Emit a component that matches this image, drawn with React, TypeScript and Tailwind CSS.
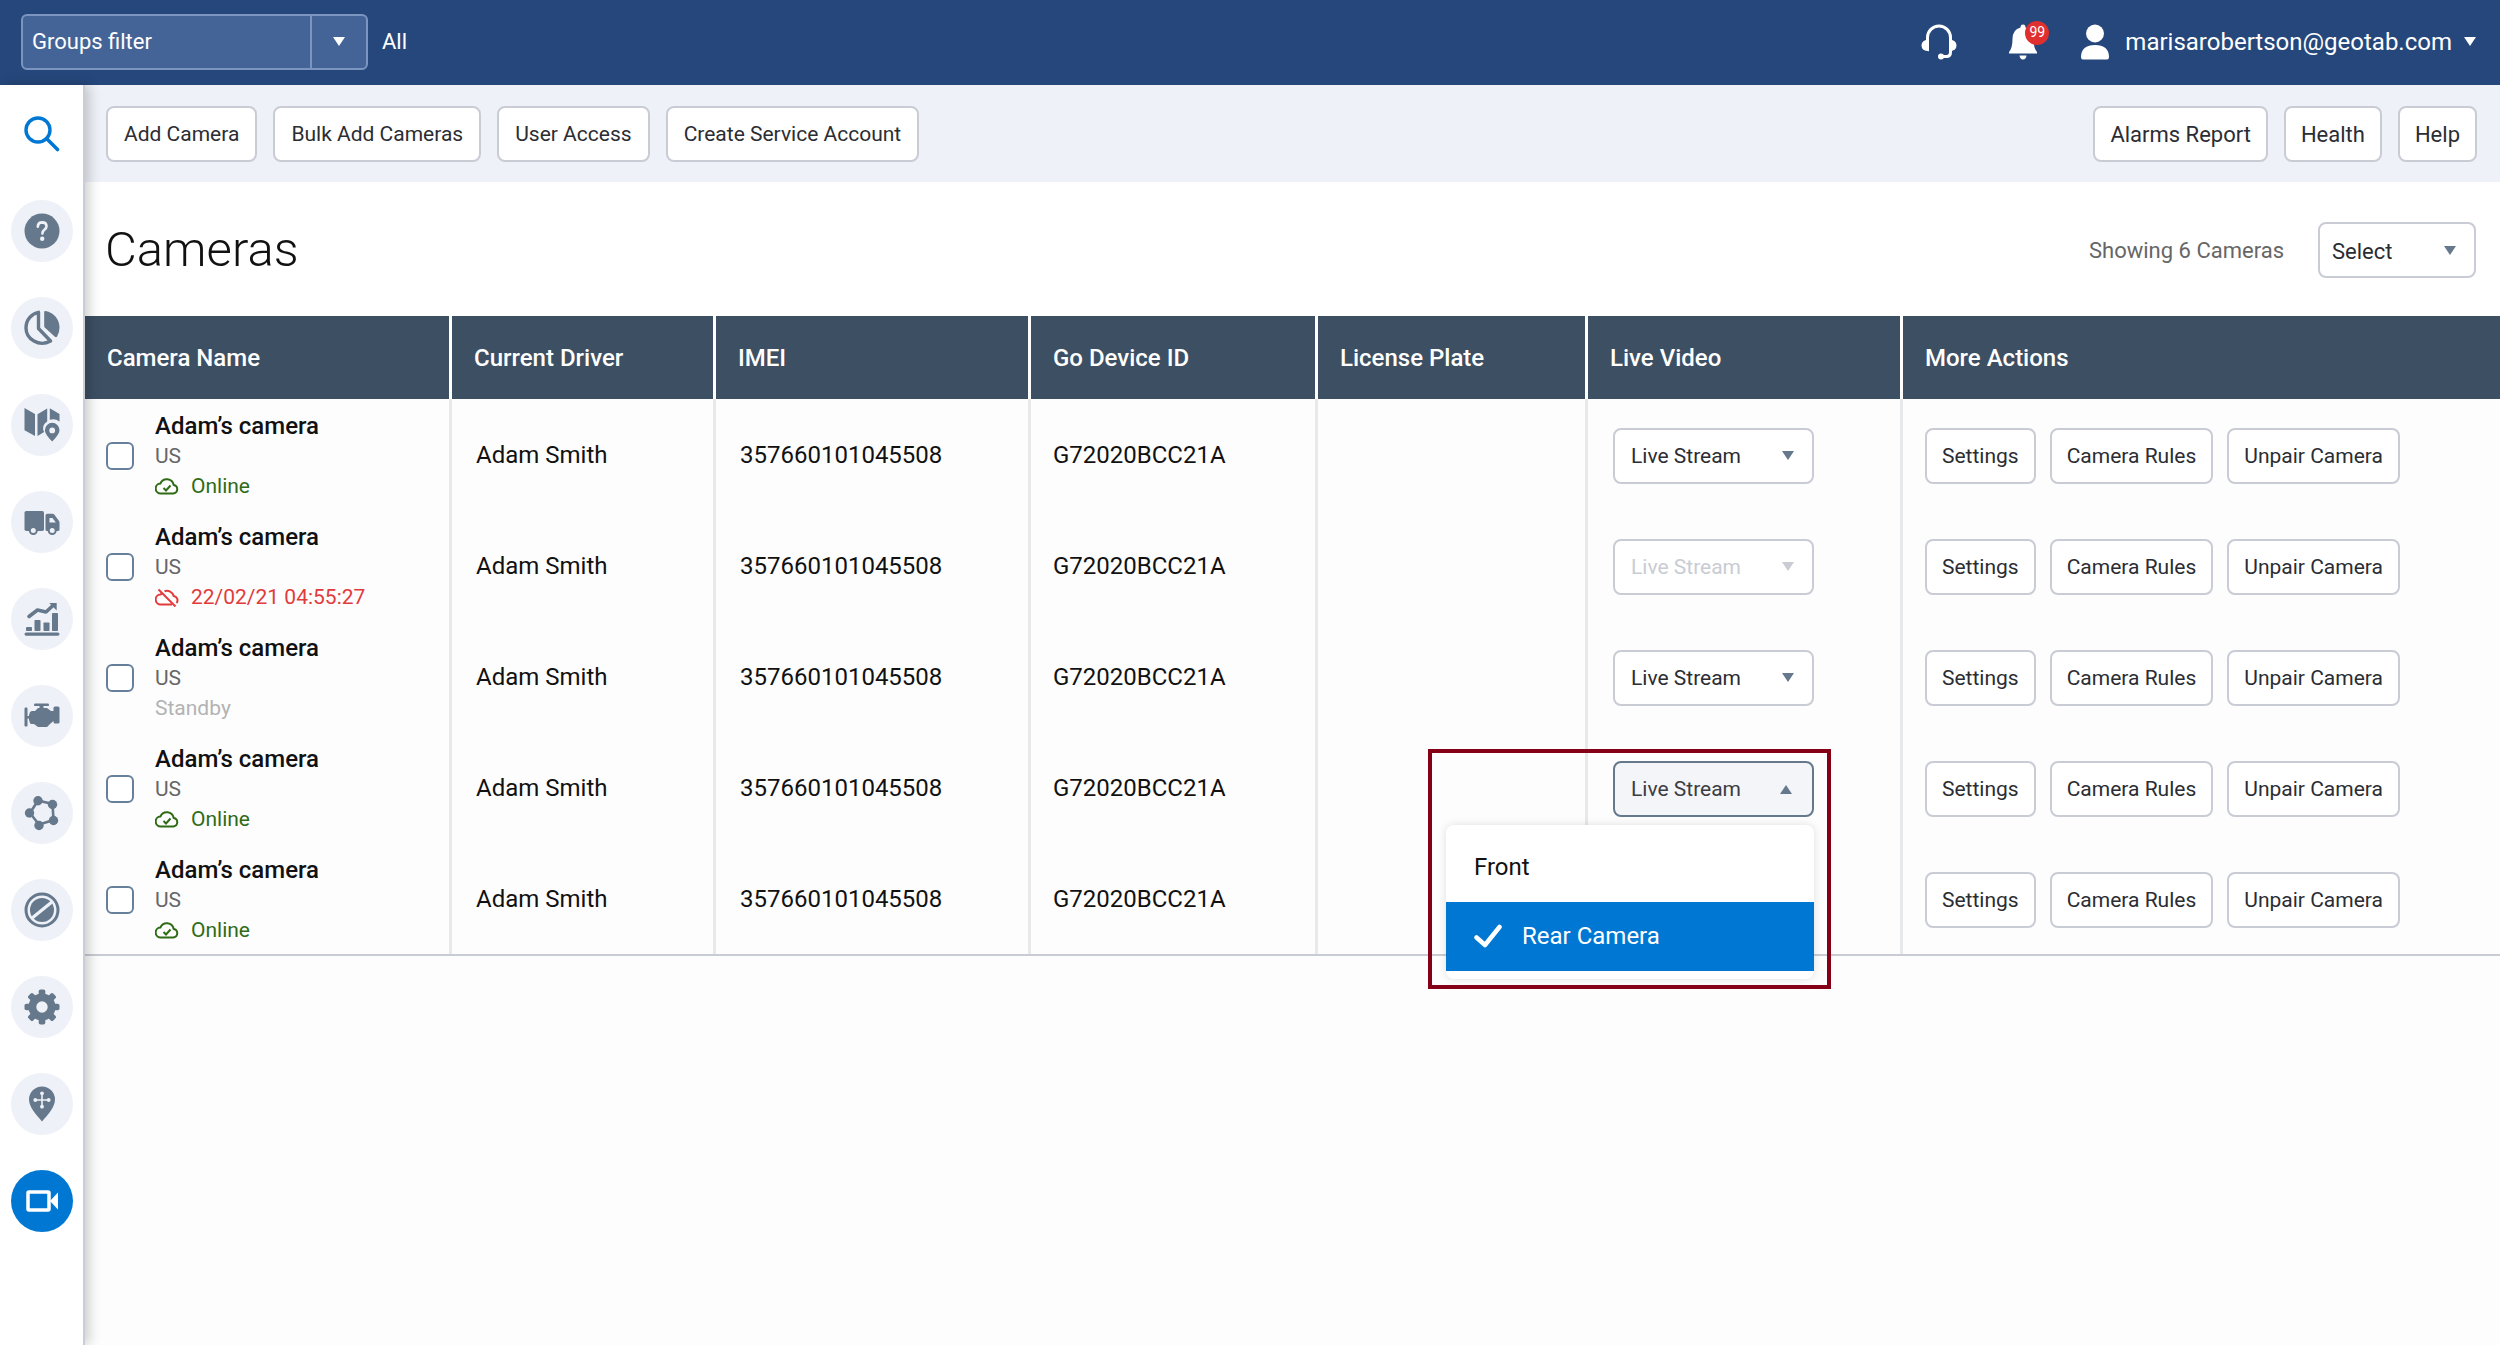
import type { ReactNode } from 'react';

interface Camera {
  id: number;
  status: 'online' | 'offline' | 'standby';
  statusText: string;
}

const CAMERAS: Camera[] = [
  { id: 1, status: 'online', statusText: 'Online' },
  { id: 2, status: 'offline', statusText: '22/02/21 04:55:27' },
  { id: 3, status: 'standby', statusText: 'Standby' },
  { id: 4, status: 'online', statusText: 'Online' },
  { id: 5, status: 'online', statusText: 'Online' },
];

const OPEN_CAMERA_ID = 4;

const STATUS_COLORS = {
  online: 'text-[#2f6b15]',
  offline: 'text-[#e23b3b]',
  standby: 'text-[#b3b3b3]',
};

const COLUMNS = [
  { label: 'Camera Name', width: 'w-[364px]' },
  { label: 'Current Driver', width: 'w-[264px]' },
  { label: 'IMEI', width: 'w-[315px]' },
  { label: 'Go Device ID', width: 'w-[287px]' },
  { label: 'License Plate', width: 'w-[270px]' },
  { label: 'Live Video', width: 'w-[315px]' },
  { label: 'More Actions', width: '' },
];

function Icon({ children, className = 'size-9' }: { children: ReactNode; className?: string }) {
  return (
    <svg viewBox="0 0 36 36" className={className} fill="currentColor" aria-hidden="true">
      {children}
    </svg>
  );
}

const NAV_ITEMS = [
  {
    label: 'Support',
    icon: (
      <>
        <circle cx="18" cy="18" r="17.5" />
        <path d="M13.8 13.6q.3-4.2 4.4-4.2 4.3.1 4.3 3.8 0 2-2.1 3.6-2 1.5-2 3.6" fill="none" stroke="#eef1f7" strokeWidth="2.6" strokeLinecap="round" />
        <circle cx="18.2" cy="25.8" r="2.2" fill="#eef1f7" />
      </>
    ),
  },
  {
    label: 'Dashboard',
    icon: (
      <>
        <path d="M14.5 2.3v16.200L26.500 31C15 37.500 2 29 2 18 2 9.500 8 3.500 14.500 2.300Z" fill="none" stroke="currentColor" strokeWidth="3.4" strokeLinejoin="round" />
        <path d="M20.200 1.800Q20.200.8 21.400 1C30.500 2.600 35.500 10 35.500 17.500q0 5-2.300 8.800-1 1.500-2.300.4L21 17.800q-.8-.8-.8-1.800Z" />
      </>
    ),
  },
  {
    label: 'Map',
    icon: (
      <>
        <path d="M.5 1 11 7v22L.5 23.200ZM13.500 7.200 23.200 1.500v13q-5 3-4 8.500l1 2-6.700 4ZM25.800 1.300 35.500 7v7.500q-4.500-3.500-9.700-1.800Z" />
        <path fillRule="evenodd" d="M28.200 15.800a7.300 7.300 0 0 1 7.300 7.200c0 4-4.300 8.300-7.300 11.500-3-3.200-7.300-7.500-7.300-11.500a7.300 7.300 0 0 1 7.300-7.200Zm0 4.700a2.900 2.900 0 1 0 0 5.800 2.900 2.900 0 0 0 0-5.800Z" />
      </>
    ),
  },
  {
    label: 'Vehicles',
    icon: (
      <>
        <rect x=".5" y="7" width="19.5" height="20" rx="1.8" />
        <path fillRule="evenodd" d="M21.500 11.500q0-1.800 1.800-1.800h5.200q1 0 1.700.9l4.500 6q.8 1 .8 2.300v6.500q0 1.600-1.600 1.600H23q-1.500 0-1.500-1.500Zm4 2.500v4.500h6.300L28.500 14Z" />
        <circle cx="9.3" cy="26.500" r="3.5" stroke="currentColor" strokeWidth="2" fill="#eef1f7" />
        <circle cx="28.200" cy="26.500" r="3.5" stroke="currentColor" strokeWidth="2" fill="#eef1f7" />
      </>
    ),
  },
  {
    label: 'Activity',
    icon: (
      <>
        <rect x=".5" y="31.500" width="35" height="3.200" rx="1.600" />
        <rect x="2" y="26" width="6" height="4" rx=".8" />
        <rect x="10.500" y="19" width="6" height="11" rx=".8" />
        <rect x="19.500" y="21.500" width="6" height="8.500" rx=".8" />
        <rect x="28" y="12" width="6" height="18" rx=".8" />
        <path d="M5 15.500 13.500 9l8.500 2 7.500-7" fill="none" stroke="currentColor" strokeWidth="3.600" strokeLinecap="round" strokeLinejoin="round" />
        <path d="M25.200 2h7.500v7.500Z" />
      </>
    ),
  },
  {
    label: 'Engine & Maintenance',
    icon: (
      <>
        <rect x=".5" y="9.500" width="3" height="19" rx="1.200" />
        <rect x="10" y="5.500" width="15" height="2.600" rx="1.200" />
        <rect x="15.500" y="7" width="4" height="4" />
        <rect x="2.500" y="18" width="4" height="2.500" />
        <path d="M8 13h3l3-3h9l4 3h2.500v-3q0-1.500 1.500-1.500h3.200q1.300 0 1.300 1.500v14q0 1.500-1.300 1.500H31q-1.500 0-1.500-1.500v-1L26 26l-3 3H14l-4-3H7.500q-1.200 0-1.700-1.500-2-5 0-10Q6.500 13 8 13Z" />
      </>
    ),
  },
  {
    label: 'Zones & Messages',
    icon: (
      <>
        <path d="m6 18 8-12.500L28.500 9l1 16L15 29.500Z" fill="none" stroke="currentColor" strokeWidth="2.600" />
        <circle cx="18.500" cy="18" r="8.500" fill="#eef1f7" />
        <circle cx="5.500" cy="18" r="4.700" />
        <circle cx="14" cy="5.800" r="4.700" />
        <circle cx="28.500" cy="9.500" r="4.700" />
        <circle cx="29.500" cy="25.500" r="4.700" />
        <circle cx="15" cy="30.500" r="4.700" />
      </>
    ),
  },
  {
    label: 'Rules',
    icon: (
      <>
        <circle cx="18" cy="18" r="16" fill="none" stroke="currentColor" strokeWidth="3" />
        <circle cx="18" cy="18" r="12" />
        <path d="M7.500 26.500 28.500 9.500" stroke="#eef1f7" strokeWidth="3.200" />
      </>
    ),
  },
  {
    label: 'Administration',
    icon: (
      <>
        <circle cx="18" cy="18" r="9.500" fill="none" stroke="currentColor" strokeWidth="8" />
        {[0, 45, 90, 135].map((angle) => (
          <rect key={angle} x="14.700" y=".5" width="6.600" height="35" rx="1.800" transform={`rotate(${angle} 18 18)`} />
        ))}
        <circle cx="18" cy="18" r="5.700" fill="#eef1f7" />
      </>
    ),
  },
  {
    label: 'Marketplace',
    icon: (
      <>
        <path d="M18 .5A13 13 0 0 1 31 13.500C31 21 24 28.500 18 35.500 12 28.500 5 21 5 13.500A13 13 0 0 1 18 .5Z" />
        <path d="M18 6.500v15M10.500 14h15" stroke="#eef1f7" strokeWidth="1.600" />
        <g fill="#eef1f7">
          <circle cx="18" cy="7.300" r="1.900" />
          <circle cx="18" cy="20.700" r="1.900" />
          <circle cx="11.300" cy="14" r="1.900" />
          <circle cx="24.700" cy="14" r="1.900" />
        </g>
      </>
    ),
  },
];

function Caret({ className = '', up = false }: { className?: string; up?: boolean }) {
  return (
    <svg viewBox="0 0 12 9" className={`h-[9px] w-3 shrink-0 ${className}`} fill="currentColor" aria-hidden="true">
      <path d={up ? 'M6 0 12 9H0Z' : 'M0 0h12L6 9Z'} />
    </svg>
  );
}

function Button({ children, className = 'px-4 text-[21px]' }: { children: ReactNode; className?: string }) {
  return (
    <button className={`h-14 rounded-lg border-2 border-[#c9ccd5] bg-white pt-0.5 whitespace-nowrap text-[#2b2d33] ${className}`}>
      {children}
    </button>
  );
}

function StatusIcon({ status }: { status: Camera['status'] }) {
  if (status === 'standby') return null;
  return (
    <svg viewBox="0 0 24 24" className="mr-3 size-6" fill="none" stroke="currentColor" strokeWidth="2" aria-hidden="true">
      {status === 'online' ? (
        <>
          <path d="M6 19.500a5 5 0 0 1-.6-10A7 7 0 0 1 18.700 11 4.300 4.300 0 0 1 18.500 19.500Z" />
          <path d="m8.500 14 2.500 2.500 4.500-5" />
        </>
      ) : (
        <>
          <path d="M17 19.500H6a5 5 0 0 1-.6-10l1.600-.8M9.500 6.300A7 7 0 0 1 18.700 11a4.300 4.300 0 0 1 2.800 7" />
          <path d="m3.500 4.500 17 17" />
        </>
      )}
    </svg>
  );
}

function LiveMenu() {
  return (
    <div className="absolute top-16 right-0 z-10 w-[368px] rounded-lg bg-white py-2 text-[24px] shadow-[0_0_8px_rgba(0,0,0,0.12)]">
      <button className="flex h-[69px] w-full items-center px-7 text-[#111]">Front</button>
      <button className="flex h-[69px] w-full items-center bg-[#0078d3] px-7 text-white">
        <svg viewBox="0 0 28 24" className="mr-5 h-6 w-7" fill="none" stroke="currentColor" strokeWidth="4.500" strokeLinecap="round" strokeLinejoin="round" aria-hidden="true">
          <path d="m2.500 13.500 8.500 7.500L25.500 3" />
        </svg>
        Rear Camera
      </button>
    </div>
  );
}

function LiveVideo({ camera }: { camera: Camera }) {
  if (camera.id === OPEN_CAMERA_ID) {
    return (
      <div className="relative w-[201px]">
        <button
          aria-expanded="true"
          className="flex h-14 w-full items-center justify-between rounded-lg border-2 border-[#66788c] bg-[#f4f5f8] pt-0.5 pr-5 pl-4 text-[21px] text-[#3b3d43]"
        >
          Live Stream
          <Caret up className="text-[#66788c]" />
        </button>
        <LiveMenu />
        <div className="pointer-events-none absolute -top-3 -right-[17px] z-20 h-[240px] w-[403px] border-4 border-[#850016]" />
      </div>
    );
  }

  const disabled = camera.status === 'offline';
  return (
    <div className={`relative w-[201px] ${disabled ? 'text-[#c9ccd3]' : 'text-[#66788c]'}`}>
      <select
        aria-label="Live video"
        disabled={disabled}
        className={`h-14 w-full appearance-none rounded-lg border-2 border-[#c9ccd5] bg-white pt-0.5 pl-4 text-[21px] ${disabled ? 'text-[#c9ccd3] opacity-100' : 'text-[#2b2d33]'}`}
      >
        <option>Live Stream</option>
      </select>
      <Caret className="pointer-events-none absolute inset-y-0 right-5 my-auto" />
    </div>
  );
}

function CameraRow({ camera }: { camera: Camera }) {
  return (
    <tr className="h-[111px]">
      <td className="pt-0.5 pl-[21px]">
        <div className="flex items-center">
          <input
            type="checkbox"
            aria-label={`Select camera ${camera.id}`}
            className="mr-[21px] size-7 appearance-none rounded-md border-2 border-[#66809c] bg-white"
          />
          <div className="leading-[30px]">
            <div className="text-[24px] font-medium text-[#111]">Adam’s camera</div>
            <div className="text-[21px] text-[#666]">US</div>
            <div className={`flex items-center text-[21px] ${STATUS_COLORS[camera.status]}`}>
              <StatusIcon status={camera.status} />
              {camera.statusText}
            </div>
          </div>
        </div>
      </td>
      <td className="border-l-[3px] border-[#e8e9ea] pl-6">Adam Smith</td>
      <td className="border-l-[3px] border-[#e8e9ea] pl-6">357660101045508</td>
      <td className="border-l-[3px] border-[#e8e9ea] pl-[22px]">G72020BCC21A</td>
      <td className="border-l-[3px] border-[#e8e9ea]" />
      <td className="border-l-[3px] border-[#e8e9ea] pt-0.5 pl-[25px]">
        <LiveVideo camera={camera} />
      </td>
      <td className="border-l-[3px] border-[#e8e9ea] pt-0.5 pl-[22px]">
        <div className="flex gap-[14px]">
          <Button className="px-[15px] text-[21px]">Settings</Button>
          <Button className="px-[15px] text-[21px]">Camera Rules</Button>
          <Button className="px-[15px] text-[21px]">Unpair Camera</Button>
        </div>
      </td>
    </tr>
  );
}

function Header() {
  return (
    <header className="flex h-[85px] items-center bg-[#25477b] pr-6 pb-0.5 pl-[21px] text-white">
      <div className="flex h-14 w-[347px] overflow-hidden rounded-md border-2 border-[#7c95c0] bg-[#446498]">
        <input aria-label="Groups filter" placeholder="Groups filter" className="min-w-0 flex-1 pl-[9px] text-[22px] placeholder:text-white placeholder:opacity-100" />
        <button aria-label="Open groups filter" className="flex w-14 items-center justify-center border-l-2 border-[#7c95c0]">
          <Caret />
        </button>
      </div>
      <span className="ml-[14px] text-[22px]">All</span>
      <div className="ml-auto flex items-center">
        <button aria-label="Support">
          <Icon>
            <path d="M6.500 19V13.500a11.500 11.500 0 0 1 23 0V28q0 4.500-4 4.500H20" fill="none" stroke="currentColor" strokeWidth="3" />
            <path d="M8 15.500v11.800Q.5 26.800.5 21.400T8 15.500ZM28 15.500v11.800q7.500-.5 7.500-5.900T28 15.500Z" />
            <circle cx="20" cy="32.500" r="3" />
          </Icon>
        </button>
        <button aria-label="Notifications" className="relative ml-12">
          <Icon>
            <path d="M18 .5q2.500 0 2.500 3 8 2 8 11.500 0 9 3.500 13v1.500H4V28q3.500-4 3.500-13 0-9.500 8-11.500 0-3 2.500-3ZM14.500 31.500h7q-.5 4-3.500 4t-3.500-4Z" />
          </Icon>
          <span className="absolute -top-[3px] left-[20px] flex size-6 items-center justify-center rounded-full bg-[#df2f2f] text-[14px]">99</span>
        </button>
        <button className="ml-9 flex items-center text-[24px]">
          <Icon>
            <circle cx="18" cy="9.500" r="9" />
            <path d="M4 33c0-8 5-12 14-12s14 4 14 12q0 2.500-2 2.500H6q-2 0-2-2.500Z" />
          </Icon>
          <span className="mr-3 ml-3">marisarobertson@geotab.com</span>
          <Caret />
        </button>
      </div>
    </header>
  );
}

function Sidebar() {
  return (
    <nav className="relative z-10 flex w-[85px] shrink-0 flex-col items-center gap-[35px] border-r-2 border-[#c9ced6] bg-white pt-[18px] text-[#66788c] shadow-[4px_0_12px_rgba(0,0,0,0.2)]">
      <button aria-label="Search" className="flex size-[62px] items-center justify-center text-[#0078d3]">
        <Icon>
          <circle cx="14" cy="14" r="12" fill="none" stroke="currentColor" strokeWidth="3.400" />
          <path d="m22.500 22.500 11 11" stroke="currentColor" strokeWidth="3.600" strokeLinecap="round" />
        </Icon>
      </button>
      {NAV_ITEMS.map((item) => (
        <a key={item.label} href="#" aria-label={item.label} className="flex size-[62px] items-center justify-center rounded-full bg-[#eef1f7]">
          <Icon>{item.icon}</Icon>
        </a>
      ))}
      <a href="#" aria-label="Cameras" aria-current="page" className="flex size-[62px] items-center justify-center rounded-full bg-[#0078d3] text-white">
        <Icon>
          <rect x="4" y="9" width="21" height="18" rx="1" fill="none" stroke="currentColor" strokeWidth="3.500" />
          <path d="M26 18 34 9.500v17Z" />
        </Icon>
      </a>
    </nav>
  );
}

export default function App() {
  return (
    <div className="flex min-h-screen flex-col bg-[#fdfdfe] font-['Roboto',sans-serif]">
      <Header />
      <div className="flex flex-1">
        <Sidebar />
        <main className="min-w-0 flex-1">
          <div className="flex h-[97px] items-center justify-between bg-[#eef1f7] pr-[23px] pl-[21px]">
            <div className="flex gap-4">
              <Button>Add Camera</Button>
              <Button>Bulk Add Cameras</Button>
              <Button>User Access</Button>
              <Button>Create Service Account</Button>
            </div>
            <div className="flex gap-4">
              <Button className="px-[15px] text-[22px]">Alarms Report</Button>
              <Button className="px-[15px] text-[22px]">Health</Button>
              <Button className="px-[15px] text-[22px]">Help</Button>
            </div>
          </div>
          <div className="flex h-[134px] items-center justify-between bg-white pt-0.5 pr-6 pl-5">
            <h1 className="text-[49px] font-light text-[#111]">Cameras</h1>
            <div className="flex items-center">
              <span className="mr-[34px] text-[22px] text-[#666]">Showing 6 Cameras</span>
              <div className="relative w-[158px] text-[#66788c]">
                <select aria-label="Bulk action" className="h-14 w-full appearance-none rounded-lg border-2 border-[#c9ccd5] bg-white pt-0.5 pl-3 text-[22px] text-[#2b2d33]">
                  <option>Select</option>
                </select>
                <Caret className="pointer-events-none absolute inset-y-0 right-5 my-auto" />
              </div>
            </div>
          </div>
          <table className="w-full table-fixed border-separate border-spacing-0 border-b-2 border-[#c9ccd3] text-[24px] text-[#111]">
            <thead>
              <tr className="h-[83px] bg-[#3d4f63] text-left text-white">
                {COLUMNS.map((column, i) => (
                  <th key={column.label} className={`pl-[22px] font-medium ${column.width} ${i > 0 ? 'border-l-[3px] border-white' : ''}`}>
                    {column.label}
                  </th>
                ))}
              </tr>
            </thead>
            <tbody>
              {CAMERAS.map((camera) => (
                <CameraRow key={camera.id} camera={camera} />
              ))}
            </tbody>
          </table>
        </main>
      </div>
    </div>
  );
}
